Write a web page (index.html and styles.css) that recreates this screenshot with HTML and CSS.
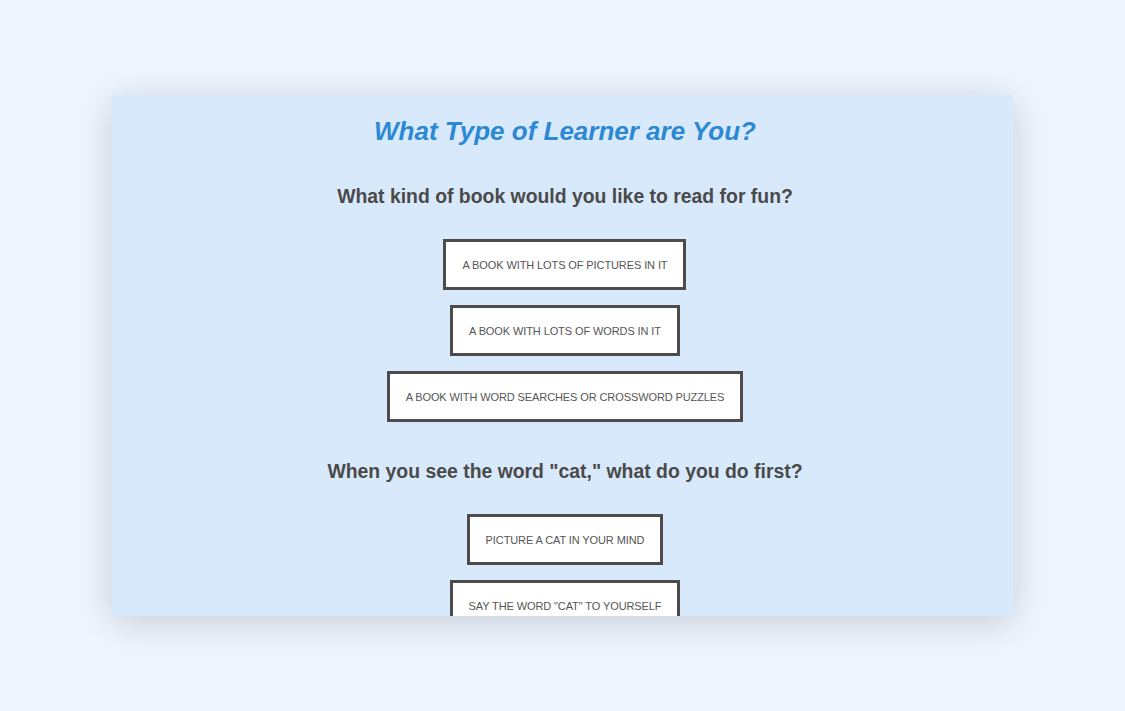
FILE: index.html
```html
<!DOCTYPE html>
<html lang="en">
<head>
<meta charset="utf-8">
<title>What Type of Learner are You?</title>
<link rel="stylesheet" href="styles.css">
</head>
<body>
<div class="stage">
  <main class="card">
    <h1 class="title">What Type of Learner are You?</h1>
    <section class="question">
      <h2 class="q-text">What kind of book would you like to read for fun?</h2>
      <div class="options">
        <button class="option">A book with lots of pictures in it</button>
        <button class="option">A book with lots of words in it</button>
        <button class="option">A book with word searches or crossword puzzles</button>
      </div>
    </section>
    <section class="question">
      <h2 class="q-text">When you see the word "cat," what do you do first?</h2>
      <div class="options">
        <button class="option">Picture a cat in your mind</button>
        <button class="option">Say the word "cat" to yourself</button>
      </div>
    </section>
  </main>
</div>
</body>
</html>
```

FILE: styles.css
```css
html, body {
  margin: 0;
  padding: 0;
}
body {
  background: #f0f6fe;
  font-family: "Liberation Sans", Arial, sans-serif;
  width: 1125px;
  height: 711px;
  overflow: hidden;
}
.stage {
  padding: 95px 0 0 112px;
}
.card {
  width: 901px;
  height: 521px;
  overflow: hidden;
  background: #d9e9fc;
  box-shadow: 0 6px 36px rgba(60, 70, 90, 0.24);
  display: flex;
  flex-direction: column;
  align-items: center;
  padding-top: 21px;
  padding-left: 5px;
  box-sizing: border-box;
}
.title {
  margin: 0;
  font-size: 26px;
  line-height: 30px;
  font-style: italic;
  font-weight: bold;
  color: #2b88d2;
}
.question {
  display: flex;
  flex-direction: column;
  align-items: center;
  margin-top: 38px;
}
.question + .question {
  margin-top: 37px;
}
.q-text {
  margin: 0;
  font-size: 19.4px;
  line-height: 24px;
  font-weight: bold;
  color: #4a4a4a;
}
.options {
  display: flex;
  flex-direction: column;
  align-items: center;
  gap: 15px;
  margin-top: 31px;
}
.option {
  height: 51px;
  padding: 0 16px;
  background: #ffffff;
  border: 3px solid #4d4b4b;
  font-family: "Liberation Sans", Arial, sans-serif;
  font-size: 11px;
  text-transform: uppercase;
  color: #555555;
  letter-spacing: -0.1px;
  cursor: pointer;
}
```
